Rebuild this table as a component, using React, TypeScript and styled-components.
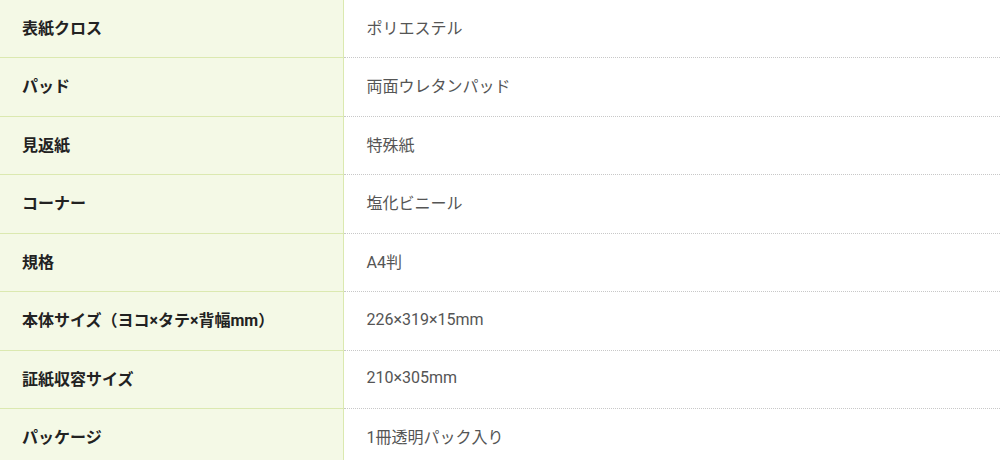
import React from 'react';
import styled, { createGlobalStyle } from 'styled-components';

const GlobalStyle = createGlobalStyle`
  html, body {
    margin: 0;
    padding: 0;
    background: #ffffff;
  }
  body {
    font-family: Roboto, "Noto Sans CJK JP", sans-serif;
  }
`;

const SpecTable = styled.table`
  width: 1000px;
  margin-top: -1px;
  border-collapse: collapse;
  table-layout: fixed;
`;

const Row = styled.tr`
  height: 58.5px;
`;

const Label = styled.th`
  width: 343px;
  box-sizing: border-box;
  padding: 0 0 3px 22px;
  text-align: left;
  vertical-align: middle;
  background-color: #f4f9e6;
  border-right: 1px solid #dbe9b0;
  border-bottom: 1px solid #dbe9b0;
  color: #222222;
  font-family: Roboto, "Noto Sans CJK JP", sans-serif;
  font-size: 16px;
  font-weight: 700;
`;

const Value = styled.td`
  padding: 0 0 3px 23px;
  vertical-align: middle;
  border-bottom: 1px dotted #c8c8c8;
  color: #555555;
  font-family: Roboto, "Noto Sans CJK JP", sans-serif;
  font-size: 16px;
  font-weight: 400;
`;

const specs: [string, string][] = [
  ['表紙クロス', 'ポリエステル'],
  ['パッド', '両面ウレタンパッド'],
  ['見返紙', '特殊紙'],
  ['コーナー', '塩化ビニール'],
  ['規格', 'A4判'],
  ['本体サイズ（ヨコ×タテ×背幅mm）', '226×319×15mm'],
  ['証紙収容サイズ', '210×305mm'],
  ['パッケージ', '1冊透明パック入り'],
];

const App: React.FC = () => {
  return (
    <>
      <GlobalStyle />
      <SpecTable>
        <tbody>
          {specs.map(([label, value]) => (
            <Row key={label}>
              <Label>{label}</Label>
              <Value>{value}</Value>
            </Row>
          ))}
        </tbody>
      </SpecTable>
    </>
  );
};

export default App;
